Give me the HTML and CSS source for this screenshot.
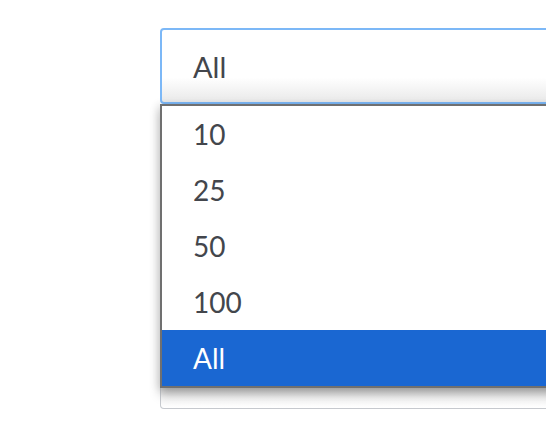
FILE: index.html
```html
<!DOCTYPE html>
<html>
<head>
<meta charset="utf-8">
<link rel="stylesheet" href="styles.css">
</head>
<body>
<div class="page">
  <div class="field">
    <div class="select">All</div>
    <ul class="menu">
      <li class="option">10</li>
      <li class="option">25</li>
      <li class="option">50</li>
      <li class="option">100</li>
      <li class="option selected">All</li>
    </ul>
    <div class="under"></div>
  </div>
</div>
</body>
</html>
```
FILE: styles.css
```css
html, body {
  margin: 0;
  padding: 0;
  background: #ffffff;
  overflow: hidden;
}
.page {
  width: 546px;
  height: 428px;
  padding: 28px 0 0 160px;
  box-sizing: border-box;
  overflow: hidden;
  font-family: Lato, "Noto Sans", sans-serif;
}
.field {
  width: 520px;
  display: flex;
  flex-direction: column;
}
.select {
  height: 76px;
  box-sizing: border-box;
  border: 2px solid #7cb8f7;
  border-radius: 4px;
  background: linear-gradient(#ffffff 0%, #ffffff 66%, #e9e9e9 100%);
  padding-left: 31px;
  display: flex;
  align-items: center;
  font-size: 29px;
  color: #43464c;
}
.menu {
  list-style: none;
  margin: 0;
  padding: 0;
  border: 2px solid #707070;
  background: #ffffff;
  box-shadow: 0 6px 10px rgba(0, 0, 0, 0.25), -3px 0 8px rgba(0, 0, 0, 0.08);
  position: relative;
  z-index: 1;
}
.option {
  height: 56px;
  padding-left: 31px;
  display: flex;
  align-items: center;
  font-size: 28px;
  color: #43464c;
}
.option.selected {
  background: #1a67d2;
  color: #ffffff;
}
.under {
  height: 20px;
  border: 1px solid #c6c9ce;
  border-top: none;
  border-radius: 0 0 4px 4px;
  background: linear-gradient(#dadada, #f4f4f4 50%, #ffffff);
}
```
